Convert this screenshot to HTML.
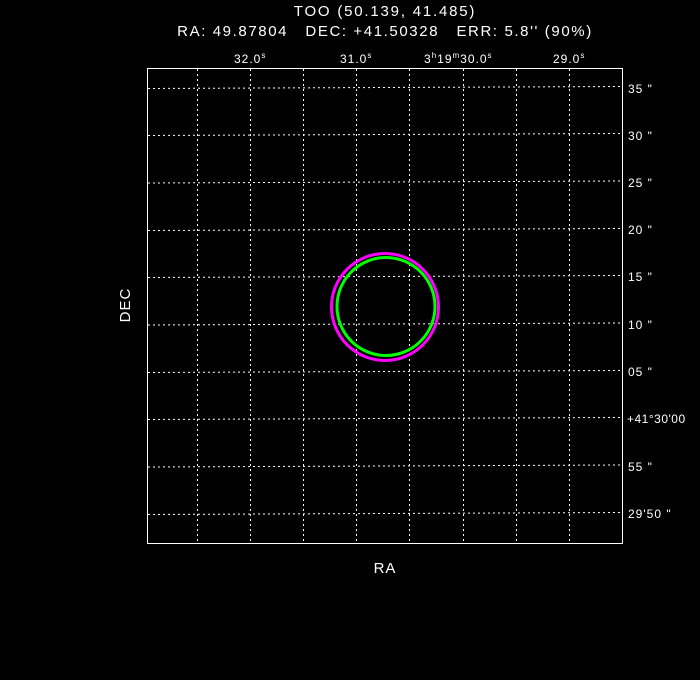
<!DOCTYPE html>
<html><head><style>
html,body{margin:0;padding:0;background:#000;width:700px;height:680px;overflow:hidden}
svg text{font-family:"Liberation Sans",sans-serif;fill:#fff}
</style></head><body>
<svg width="700" height="680" xmlns="http://www.w3.org/2000/svg">
<g stroke="#fff" stroke-width="1" stroke-dasharray="2,3" fill="none">
<line x1="148" y1="88.5" x2="622" y2="86.5"/>
<line x1="148" y1="135.5" x2="622" y2="133.5"/>
<line x1="148" y1="183" x2="622" y2="181"/>
<line x1="148" y1="230.5" x2="622" y2="228.5"/>
<line x1="148" y1="277.5" x2="622" y2="275.5"/>
<line x1="148" y1="325" x2="622" y2="323"/>
<line x1="148" y1="372.5" x2="622" y2="370.5"/>
<line x1="148" y1="419.5" x2="622" y2="417.5"/>
<line x1="148" y1="467" x2="622" y2="465"/>
<line x1="148" y1="514.5" x2="622" y2="512.5"/>
<line x1="197.5" y1="69" x2="197.5" y2="542"/>
<line x1="250.5" y1="69" x2="250.5" y2="542"/>
<line x1="303.5" y1="69" x2="303.5" y2="542"/>
<line x1="356.5" y1="69" x2="356.5" y2="542"/>
<line x1="409.5" y1="69" x2="409.5" y2="542"/>
<line x1="463.5" y1="69" x2="463.5" y2="542"/>
<line x1="516.5" y1="69" x2="516.5" y2="542"/>
<line x1="569.5" y1="69" x2="569.5" y2="542"/>
</g>
<rect x="147.5" y="68.5" width="475" height="475" fill="none" stroke="#fff" stroke-width="1"/>
<circle cx="385" cy="307" r="53.5" fill="none" stroke="#ff00ff" stroke-width="3"/>
<circle cx="386" cy="306.5" r="49" fill="none" stroke="#00ff00" stroke-width="3"/>
<text x="385" y="16" font-size="15" text-anchor="middle" letter-spacing="1.8">TOO (50.139, 41.485)</text>
<text x="385" y="36" font-size="15" text-anchor="middle" letter-spacing="1.6" xml:space="preserve">RA: 49.87804   DEC: +41.50328   ERR: 5.8'' (90%)</text>
<g font-size="12" letter-spacing="1">
<text x="234" y="63">32.0<tspan font-size="8" dy="-5">s</tspan></text>
<text x="340" y="63">31.0<tspan font-size="8" dy="-5">s</tspan></text>
<text x="424" y="63">3<tspan font-size="8" dy="-5">h</tspan><tspan dy="5">19</tspan><tspan font-size="8" dy="-5">m</tspan><tspan dy="5">30.0</tspan><tspan font-size="8" dy="-5">s</tspan></text>
<text x="553" y="63">29.0<tspan font-size="8" dy="-5">s</tspan></text>
<text x="628" y="93">35 "</text>
<text x="628" y="140">30 "</text>
<text x="628" y="187">25 "</text>
<text x="628" y="234">20 "</text>
<text x="628" y="281">15 "</text>
<text x="628" y="329">10 "</text>
<text x="628" y="376">05 "</text>
<text x="627" y="423" letter-spacing="0.5">+41°30'00</text>
<text x="628" y="471">55 "</text>
<text x="628" y="518">29'50 "</text>
</g>
<text x="385" y="573" font-size="15" text-anchor="middle" letter-spacing="1">RA</text>
<text transform="translate(130,305) rotate(-90)" font-size="15" text-anchor="middle" letter-spacing="1">DEC</text>
</svg>
</body></html>
